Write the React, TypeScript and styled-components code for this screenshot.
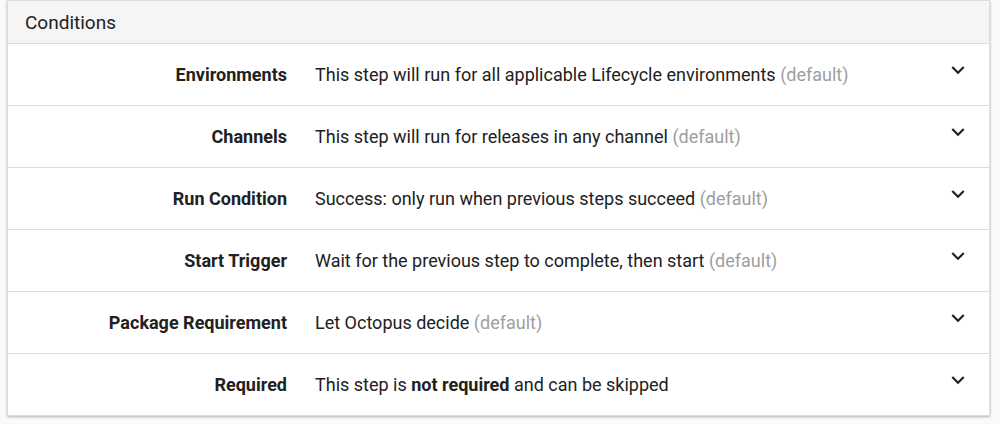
import React from "react";
import styled, { createGlobalStyle } from "styled-components";

const Global = createGlobalStyle`
  html, body { margin: 0; padding: 0; background: #fafafa; }
  body { font-family: Roboto, "Noto Sans", Arial, sans-serif; color: #212121; }
`;

const Page = styled.div`
  padding: 0 10px 0 7px;
  height: 424px;
  box-sizing: border-box;
`;

const Card = styled.section`
  background: #fff;
  border: 1px solid #dcdcdc;
  box-shadow: 0 1px 3px rgba(0, 0, 0, 0.18), 0 1px 2px rgba(0, 0, 0, 0.12);
`;

const Header = styled.div`
  height: 42px;
  display: flex;
  align-items: center;
  padding-left: 17px;
  background: #f5f5f5;
  border-bottom: 1px solid #dcdcdc;
  font-size: 19px;
  color: #212121;
`;

const Row = styled.div<{ $last?: boolean }>`
  height: 61px;
  display: grid;
  grid-template-columns: 279px 1fr 40px;
  column-gap: 28px;
  align-items: center;
  border-bottom: ${(p) => (p.$last ? "none" : "1px solid #dcdcdc")};
  font-size: 18px;
`;

const Label = styled.div`
  text-align: right;
  font-weight: 700;
  color: #212121;
`;

const Value = styled.div`
  color: #212121;
  b { font-weight: 700; }
`;

const Muted = styled.span`
  color: #9e9e9e;
`;

const Chevron = styled.div`
  display: flex;
  align-items: center;
  justify-content: flex-start;
  margin-top: -10px;
  margin-left: -4px;
`;

const ChevronIcon = () => (
  <svg width="26" height="26" viewBox="0 0 24 24">
    <path d="M7.41 8.59L12 13.17l4.59-4.58L18 10l-6 6-6-6 1.41-1.41z" fill="#212121" />
  </svg>
);

const rows: { label: string; value: React.ReactNode }[] = [
  {
    label: "Environments",
    value: (
      <>
        This step will run for all applicable Lifecycle environments <Muted>(default)</Muted>
      </>
    ),
  },
  {
    label: "Channels",
    value: (
      <>
        This step will run for releases in any channel <Muted>(default)</Muted>
      </>
    ),
  },
  {
    label: "Run Condition",
    value: (
      <>
        Success: only run when previous steps succeed <Muted>(default)</Muted>
      </>
    ),
  },
  {
    label: "Start Trigger",
    value: (
      <>
        Wait for the previous step to complete, then start <Muted>(default)</Muted>
      </>
    ),
  },
  {
    label: "Package Requirement",
    value: (
      <>
        Let Octopus decide <Muted>(default)</Muted>
      </>
    ),
  },
  {
    label: "Required",
    value: (
      <>
        This step is <b>not required</b> and can be skipped
      </>
    ),
  },
];

export default function App() {
  return (
    <Page>
      <Global />
      <Card>
        <Header>Conditions</Header>
        {rows.map((r, i) => (
          <Row key={r.label} $last={i === rows.length - 1}>
            <Label>{r.label}</Label>
            <Value>{r.value}</Value>
            <Chevron>
              <ChevronIcon />
            </Chevron>
          </Row>
        ))}
      </Card>
    </Page>
  );
}
